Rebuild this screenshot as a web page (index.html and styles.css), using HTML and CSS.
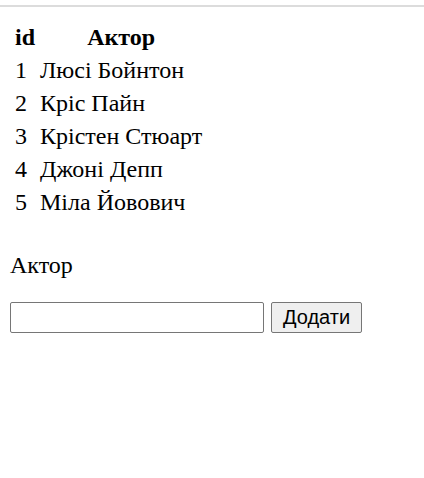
FILE: index.html
```html
<!DOCTYPE html>
<html lang="uk">
<head>
<meta charset="utf-8">
<link rel="stylesheet" href="styles.css">
</head>
<body>
<div class="topbar"></div>
<div class="content">
  <table class="actors">
    <thead>
      <tr><th>id</th><th>Актор</th></tr>
    </thead>
    <tbody>
      <tr><td>1</td><td>Люсі Бойнтон</td></tr>
      <tr><td>2</td><td>Кріс Пайн</td></tr>
      <tr><td>3</td><td>Крістен Стюарт</td></tr>
      <tr><td>4</td><td>Джоні Депп</td></tr>
      <tr><td>5</td><td>Міла Йовович</td></tr>
    </tbody>
  </table>
  <p class="label">Актор</p>
  <form class="add-form">
    <input class="actor-input" type="text">
    <button class="add-btn" type="button">Додати</button>
  </form>
</div>
</body>
</html>
```
FILE: styles.css
```css
html, body {
  margin: 0;
  padding: 0;
  background: #fff;
}
body {
  font-family: "Liberation Serif", "Times New Roman", serif;
  font-size: 24px;
  color: #000;
}
.topbar {
  margin-top: 5px;
  border-top: 2px solid #dcdcdc;
}
.content {
  padding: 13px 10px 0;
}
.actors {
  border-collapse: separate;
  border-spacing: 2px;
  font-size: 24px;
}
.actors th, .actors td {
  padding: 2px 3px;
}
.actors th:first-child, .actors td:first-child {
  padding-right: 0;
}
.actors th {
  font-weight: bold;
  text-align: center;
}
.actors td {
  text-align: left;
}
.label {
  margin: 32px 0 23px;
}
.add-form {
  display: flex;
  align-items: center;
  gap: 7px;
}
.actor-input {
  box-sizing: border-box;
  width: 254px;
  height: 31px;
  border: 1px solid #767676;
  border-radius: 2px;
  padding: 1px 2px;
  font-size: 20px;
  margin: 0;
}
.add-btn {
  box-sizing: border-box;
  height: 31px;
  padding: 1px 11px;
  font-family: "Liberation Sans", Arial, sans-serif;
  font-size: 20px;
  background: #efefef;
  border: 1px solid #767676;
  border-radius: 2px;
  color: #000;
  margin: 0;
}
```
